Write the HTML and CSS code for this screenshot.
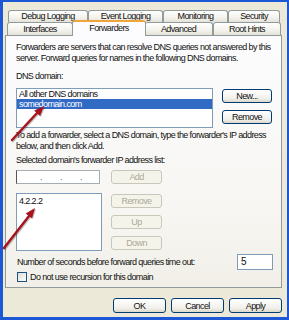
FILE: index.html
```html
<!DOCTYPE html>
<html lang="en">
<head>
  <meta charset="UTF-8" />
  <title>Forwarders</title>
  <link rel="stylesheet" href="styles.css">
</head>
<body>
  <div class="frame">
    <div class="dialog">
      <div class="tabs">
        <div class="tab-row back">
          <div class="tab t-debug">Debug Logging</div>
          <div class="tab t-event">Event Logging</div>
          <div class="tab t-monitor">Monitoring</div>
          <div class="tab t-security">Security</div>
        </div>
        <div class="tab-row front">
          <div class="tab t-iface">Interfaces</div>
          <div class="tab t-fwd active">Forwarders</div>
          <div class="tab t-adv">Advanced</div>
          <div class="tab t-root">Root Hints</div>
        </div>
      </div>

      <div class="panel">
        <p class="intro">Forwarders are servers that can resolve DNS queries not answered by this<br>server. Forward queries for names in the following DNS domains.</p>
        <div class="label dns-label">DNS domain:</div>
        <div class="domain-row">
          <div class="listbox domains">
            <div class="item">All other DNS domains</div>
            <div class="item selected">somedomain.com</div>
          </div>
          <div class="btn-col">
            <button class="btn">New...</button>
            <button class="btn">Remove</button>
          </div>
        </div>
        <p class="hint">To add a forwarder, select a DNS domain, type the forwarder's IP address<br>below, and then click Add.</p>
        <div class="label ip-label">Selected domain's forwarder IP address list:</div>
        <div class="ip-row">
          <div class="ip-input"><span>.</span><span>.</span><span>.</span></div>
          <button class="btn" disabled>Add</button>
        </div>
        <div class="fwd-row">
          <div class="listbox ips">
            <div class="item">4.2.2.2</div>
          </div>
          <div class="btn-col">
            <button class="btn" disabled>Remove</button>
            <button class="btn" disabled>Up</button>
            <button class="btn" disabled>Down</button>
          </div>
        </div>
        <div class="timeout-row">
          <span>Number of seconds before forward queries time out:</span>
          <div class="num-input">5</div>
        </div>
        <div class="check">
          <span class="box"></span>
          <span>Do not use recursion for this domain</span>
        </div>
      </div>

      <div class="footer">
        <button class="btn">OK</button>
        <button class="btn">Cancel</button>
        <button class="btn">Apply</button>
      </div>
    </div>

    <svg class="arrows" viewBox="0 0 289 320" width="289" height="320">
      <g class="shadow">
        <line x1="13" y1="141" x2="38" y2="114" />
        <polygon points="45,107 41,117 35,111" />
        <line x1="5" y1="249" x2="30" y2="217" />
        <polygon points="36,209 33,219 27,214" />
      </g>
      <g class="arrow">
        <line x1="12" y1="140" x2="37" y2="113" />
        <polygon points="44,106 40.1,116 34.2,110.5" />
        <line x1="4" y1="248" x2="29" y2="216" />
        <polygon points="35,208 32,218.4 25.7,213.5" />
      </g>
    </svg>
  </div>
</body>
</html>
```

FILE: styles.css
```css
* {
  box-sizing: border-box;
}
body {
  margin: 0;
  background: #fff;
  font-family: "Liberation Sans", Arial, sans-serif;
  font-size: 9px;
  letter-spacing: -0.6px;
  color: #111;
}
.frame {
  position: relative;
  width: 289px;
  height: 320px;
  background: #1c57d6;
  padding: 2px 2px 3px 3px;
}
.dialog {
  height: 100%;
  background: #ece9d8;
  padding-top: 8px;
  display: flex;
  flex-direction: column;
}

/* tabs */
.tabs {
  margin-left: 2px;
  width: 277px;
}
.tab-row {
  display: flex;
}
.tab-row.back {
  padding-left: 3px;
  height: 12px;
}
.tab-row.front {
  padding-left: 2px;
  height: 13px;
}
.tab {
  border: 1px solid #919b9c;
  border-bottom: none;
  border-radius: 3px 3px 0 0;
  background: linear-gradient(#ffffff, #f3f2ec 60%, #e4e2d8);
  text-align: center;
  white-space: nowrap;
}
.back .tab {
  height: 12px;
  line-height: 11px;
}
.front .tab {
  height: 13px;
  line-height: 13px;
}
.t-debug { width: 80px; }
.t-event { width: 75px; }
.t-monitor { width: 65px; }
.t-security { width: 52px; }
.t-iface { width: 66px; }
.t-fwd { width: 72px; }
.t-adv { width: 68px; }
.t-root { width: 68px; }
.tab.active {
  position: relative;
  z-index: 2;
  height: 16px;
  margin: -2px -1px -1px;
  width: 74px;
  background: #fcfcfe;
  border-top: 2px solid #f0a53a;
  line-height: 12px;
}
.tab.active + .tab {
  border-left: none;
}

/* panel */
.panel {
  margin-left: 2px;
  width: 277px;
  height: 253px;
  border: 1px solid #919b9c;
  background: linear-gradient(#fcfcfe, #f7f6f2 70%, #f1efe8);
  padding: 0 9px 0 10px;
}
.intro,
.hint {
  margin: 6px 0 0;
  line-height: 11px;
  white-space: nowrap;
}
.hint {
  margin-top: 2px;
}
.label {
  line-height: 11px;
}
.dns-label {
  margin-top: 7px;
}
.ip-label {
  margin-top: 3px;
}
.domain-row,
.fwd-row,
.ip-row {
  display: flex;
  align-items: flex-start;
}
.domain-row {
  margin-top: 6px;
}
.listbox {
  border: 1px solid #7f9db9;
  background: #fff;
}
.domains {
  width: 197px;
  height: 40px;
}
.item {
  line-height: 10px;
  padding-left: 2px;
  white-space: nowrap;
}
.item.selected {
  background: #316ac5;
  color: #fff;
}
.btn-col {
  display: flex;
  flex-direction: column;
  gap: 7px;
  padding-top: 1px;
  margin-left: 9px;
}
.btn {
  font: inherit;
  letter-spacing: inherit;
  color: #111;
  width: 51px;
  height: 14px;
  padding: 0;
  line-height: 12px;
  border: 1px solid #003c74;
  border-radius: 3px;
  background: linear-gradient(#ffffff, #f1f0ea 70%, #dcd8cb);
}
.btn:disabled {
  color: #aca899;
  border-color: #c9c7ba;
  background: #f5f4ea;
}
.domain-row .btn {
  width: 50px;
}
.ip-row {
  margin-top: 4px;
}
.ip-input {
  width: 84px;
  height: 14px;
  border: 1px solid #a5acb2;
  border-left-color: #555;
  background: #fff;
  display: flex;
  justify-content: space-around;
  padding: 0 8px 0 14px;
  line-height: 12px;
  color: #666;
}
.ip-row .btn {
  margin-left: 11px;
}
.fwd-row {
  margin-top: 9px;
}
.ips {
  width: 86px;
  height: 58px;
  padding-top: 2px;
}
.timeout-row {
  margin-top: 3px;
  height: 16px;
  display: flex;
  align-items: center;
  justify-content: space-between;
  padding-left: 1px;
}
.num-input {
  width: 36px;
  height: 16px;
  margin-right: -1px;
  border: 1px solid #7f9db9;
  background: #fff;
  padding-left: 3px;
  line-height: 14px;
  font-size: 10px;
}
.check {
  margin-top: 1px;
  display: flex;
  align-items: center;
  gap: 3px;
  height: 11px;
  padding-left: 1px;
}
.box {
  width: 10px;
  height: 10px;
  border: 1px solid #1c5180;
  background: linear-gradient(135deg, #dcdcd7, #fff);
}

/* dialog buttons */
.footer {
  margin-top: 10px;
  display: flex;
  justify-content: flex-end;
  gap: 5px;
  padding-right: 5px;
}
.footer .btn {
  width: 53px;
  height: 15px;
}

/* red callout arrows */
.arrows {
  position: absolute;
  left: 0;
  top: 0;
  pointer-events: none;
}
.arrows line {
  stroke-width: 2.4;
  stroke-linecap: round;
}
.shadow line {
  stroke: rgba(0, 0, 0, 0.25);
}
.shadow polygon {
  fill: rgba(0, 0, 0, 0.25);
}
.arrow line {
  stroke: #a8121c;
}
.arrow polygon {
  fill: #a8121c;
}
```
